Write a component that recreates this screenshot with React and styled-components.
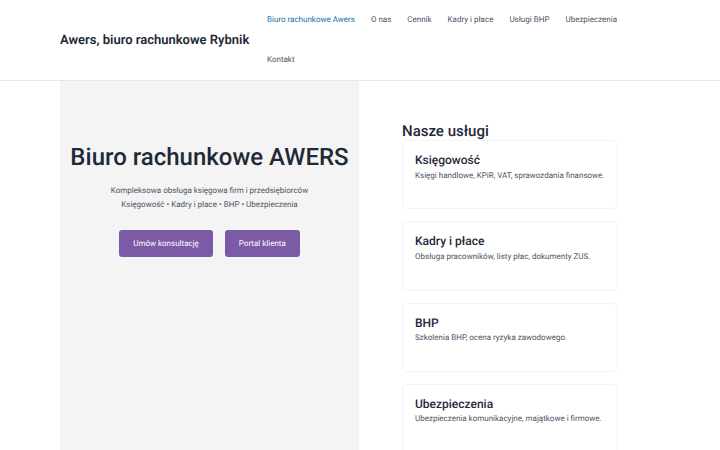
import styled, { createGlobalStyle } from "styled-components";

const Global = createGlobalStyle`
  html, body {
    margin: 0;
    padding: 0;
    background: #ffffff;
    height: 450px;
    overflow: hidden;
    font-family: Roboto, "Liberation Sans", sans-serif;
    text-rendering: geometricPrecision;
  }
  #root {
    opacity: 0.999;
  }
  * {
    box-sizing: border-box;
  }
`;
const Header = styled.header`
  height: 81px;
  border-bottom: 1px solid #e5e7eb;
  padding-left: 60px;
  display: flex;
  align-items: center;
`;
const Logo = styled.div`
  width: 207px;
  font-size: 13px;
  font-weight: 600;
  color: #1f2937;
  white-space: nowrap;
`;
const Nav = styled.nav`
  width: 353px;
  display: flex;
  flex-wrap: wrap;
  column-gap: 16px;
`;
const NavLink = styled.a`
  font-size: 8px;
  line-height: 40px;
  color: ${(p) => (p.$active ? "#1d6fa5" : "#4b5563")};
`;
const Main = styled.main`
  display: flex;
  padding-left: 60px;
`;
const Hero = styled.section`
  width: 299px;
  height: 369px;
  background: #f4f4f5;
  text-align: center;
  padding-top: 60px;
`;
const HeroTitle = styled.h1`
  margin: 0;
  font-size: 24px;
  line-height: 32px;
  font-weight: 500;
  color: #1f2937;
`;
const HeroText = styled.p`
  margin: 11px 0 0;
  font-size: 8px;
  line-height: 14px;
  color: #4b5563;
`;
const Actions = styled.div`
  display: flex;
  justify-content: center;
  gap: 12px;
  margin-top: 17.5px;
`;
const Button = styled.a`
  height: 27px;
  padding: 0 14px;
  display: flex;
  align-items: center;
  background: #7b5aa6;
  border-radius: 3px;
  color: #ffffff;
  font-size: 8px;
`;
const Services = styled.section`
  width: 216px;
  margin-left: 43px;
  padding-top: 41px;
`;
const ServicesTitle = styled.h2`
  margin: 0;
  font-size: 15px;
  line-height: 18px;
  font-weight: 500;
  color: #1f2937;
`;
const Cards = styled.div`
  display: flex;
  flex-direction: column;
  gap: 12px;
`;
const Card = styled.article`
  height: 69.3px;
  border: 1px solid #f3f4f6;
  border-radius: 5px;
  padding: 12px;
`;
const CardTitle = styled.h3`
  margin: 0;
  font-size: 12px;
  line-height: 15px;
  font-weight: 500;
  color: #1f2937;
`;
const CardText = styled.p`
  margin: 1.5px 0 0;
  font-size: 8px;
  line-height: 12px;
  color: #4b5563;
`;

const links = ["O nas", "Cennik", "Kadry i płace", "Usługi BHP", "Ubezpieczenia", "Kontakt"];
const services = [
  ["Księgowość", "Księgi handlowe, KPiR, VAT, sprawozdania finansowe."],
  ["Kadry i płace", "Obsługa pracowników, listy płac, dokumenty ZUS."],
  ["BHP", "Szkolenia BHP, ocena ryzyka zawodowego."],
  ["Ubezpieczenia", "Ubezpieczenia komunikacyjne, majątkowe i firmowe."],
];

const App = () => {
  return (
    <>
      <Global />
      <Header>
        <Logo>Awers, biuro rachunkowe Rybnik</Logo>
        <Nav>
          <NavLink $active>Biuro rachunkowe Awers</NavLink>
          {links.map((l) => (
            <NavLink key={l}>{l}</NavLink>
          ))}
        </Nav>
      </Header>
      <Main>
        <Hero>
          <HeroTitle>Biuro rachunkowe AWERS</HeroTitle>
          <HeroText>
            Kompleksowa obsługa księgowa firm i przedsiębiorców
            <br />
            Księgowość • Kadry i płace • BHP • Ubezpieczenia
          </HeroText>
          <Actions>
            <Button>Umów konsultację</Button>
            <Button>Portal klienta</Button>
          </Actions>
        </Hero>
        <Services>
          <ServicesTitle>Nasze usługi</ServicesTitle>
          <Cards>
            {services.map(([title, text]) => (
              <Card key={title}>
                <CardTitle>{title}</CardTitle>
                <CardText>{text}</CardText>
              </Card>
            ))}
          </Cards>
        </Services>
      </Main>
    </>
  );
};

export default App;
